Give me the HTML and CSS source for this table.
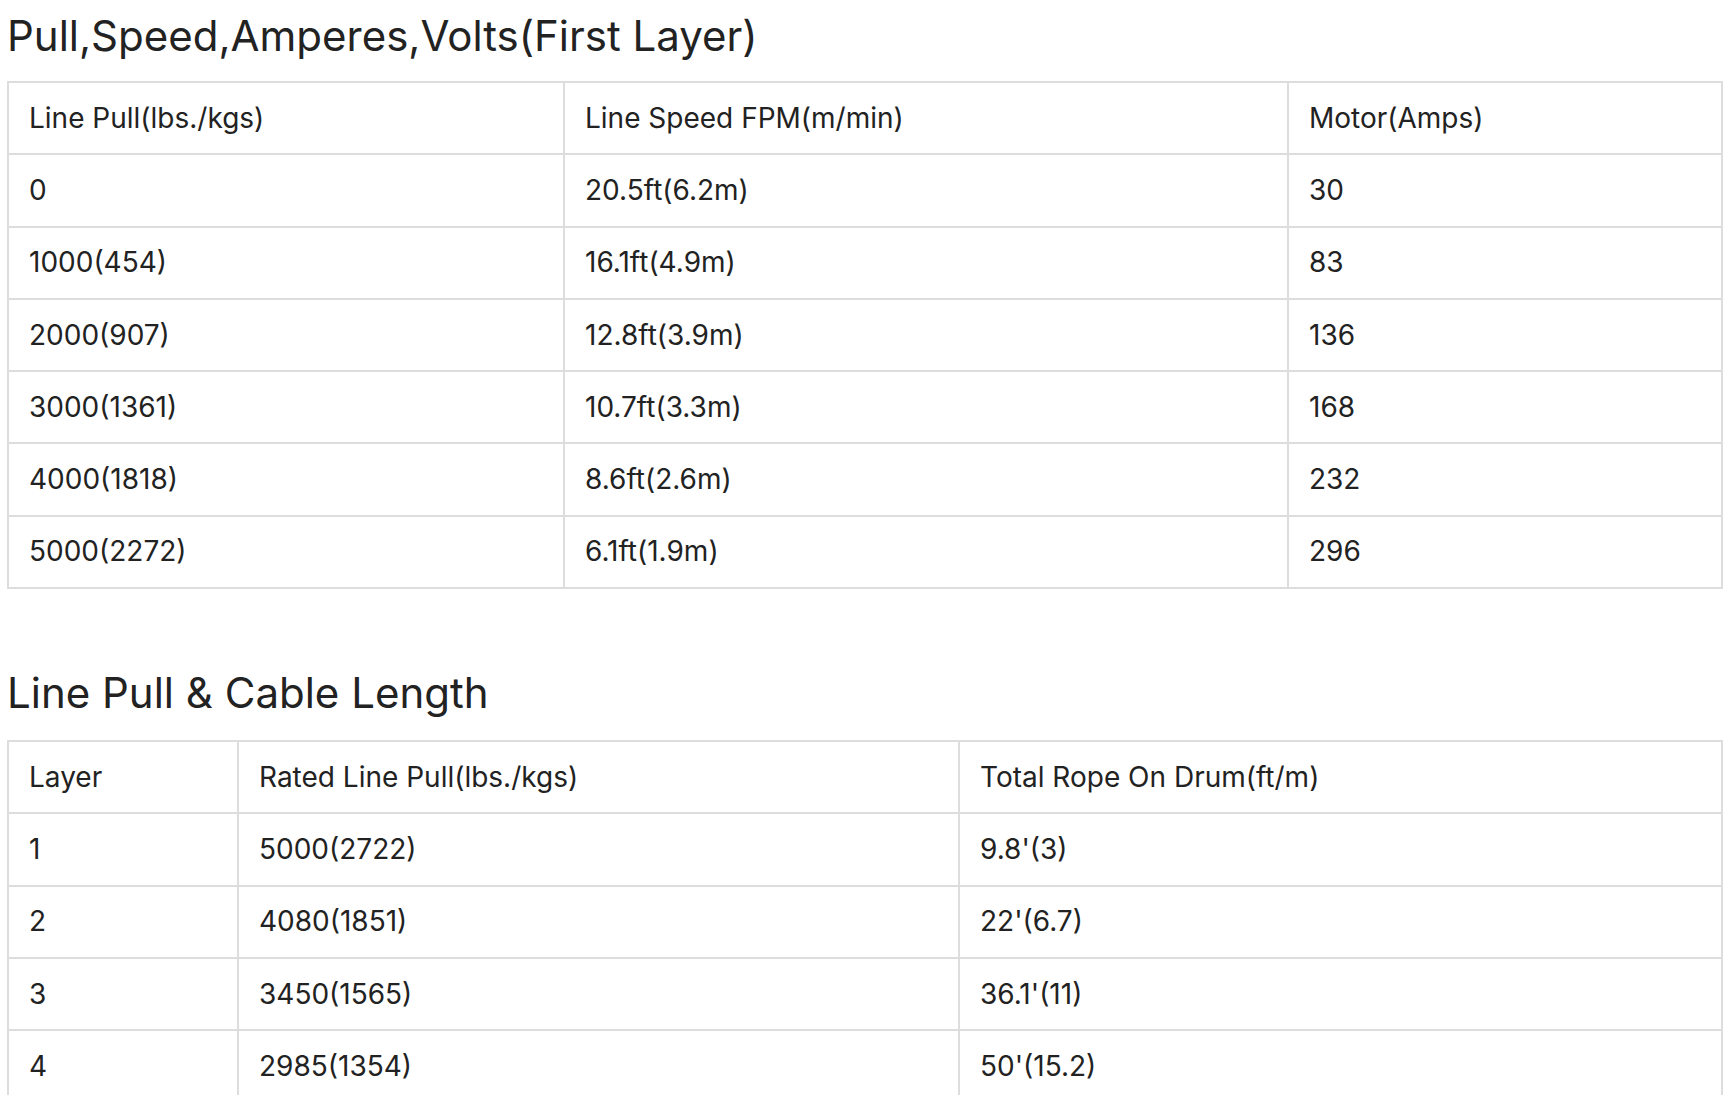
FILE: index.html
```html
<!DOCTYPE html>
<html lang="en">
<head>
<meta charset="utf-8">
<title>Specifications</title>
<link rel="stylesheet" href="styles.css">
</head>
<body>
<div class="page">
  <section class="spec">
    <h2 class="spec-title">Pull,Speed,Amperes,Volts(First Layer)</h2>
    <table class="spec-table t1">
      <colgroup><col class="c1"><col class="c2"><col class="c3"></colgroup>
      <tr><td>Line Pull(lbs./kgs)</td><td>Line Speed FPM(m/min)</td><td>Motor(Amps)</td></tr>
      <tr><td>0</td><td>20.5ft(6.2m)</td><td>30</td></tr>
      <tr><td>1000(454)</td><td>16.1ft(4.9m)</td><td>83</td></tr>
      <tr><td>2000(907)</td><td>12.8ft(3.9m)</td><td>136</td></tr>
      <tr><td>3000(1361)</td><td>10.7ft(3.3m)</td><td>168</td></tr>
      <tr><td>4000(1818)</td><td>8.6ft(2.6m)</td><td>232</td></tr>
      <tr><td>5000(2272)</td><td>6.1ft(1.9m)</td><td>296</td></tr>
    </table>
  </section>
  <section class="spec spec-second">
    <h2 class="spec-title">Line Pull &amp; Cable Length</h2>
    <table class="spec-table t2">
      <colgroup><col class="c1"><col class="c2"><col class="c3"></colgroup>
      <tr><td>Layer</td><td>Rated Line Pull(lbs./kgs)</td><td>Total Rope On Drum(ft/m)</td></tr>
      <tr><td>1</td><td>5000(2722)</td><td>9.8'(3)</td></tr>
      <tr><td>2</td><td>4080(1851)</td><td>22'(6.7)</td></tr>
      <tr><td>3</td><td>3450(1565)</td><td>36.1'(11)</td></tr>
      <tr><td>4</td><td>2985(1354)</td><td>50'(15.2)</td></tr>
    </table>
  </section>
</div>
</body>
</html>
```

FILE: styles.css
```css
html, body {
  margin: 0;
  padding: 0;
  overflow: hidden;
  background: #ffffff;
}

body {
  font-family: Inter, "Noto Sans", "Liberation Sans", sans-serif;
  color: #222222;
}

.page {
  padding: 10px 0 0 7px;
}

.spec-title {
  margin: 0 0 19px 0;
  font-size: 42px;
  font-weight: 400;
  line-height: 52px;
  color: #222222;
}

.spec-second {
  margin-top: 78px;
}

.spec-second .spec-title {
  margin-bottom: 21px;
}

.spec-table {
  border-collapse: collapse;
  width: 1716px;
  table-layout: fixed;
  font-size: 28px;
}

.spec-table td {
  border: 2px solid #dddddd;
  padding: 0 20px;
  height: 70.3px;
  vertical-align: middle;
  white-space: nowrap;
  line-height: 35px;
}

.t1 .c1 { width: 556px; }
.t1 .c2 { width: 724px; }
.t2 .c1 { width: 230px; }
.t2 .c2 { width: 721px; }
```
